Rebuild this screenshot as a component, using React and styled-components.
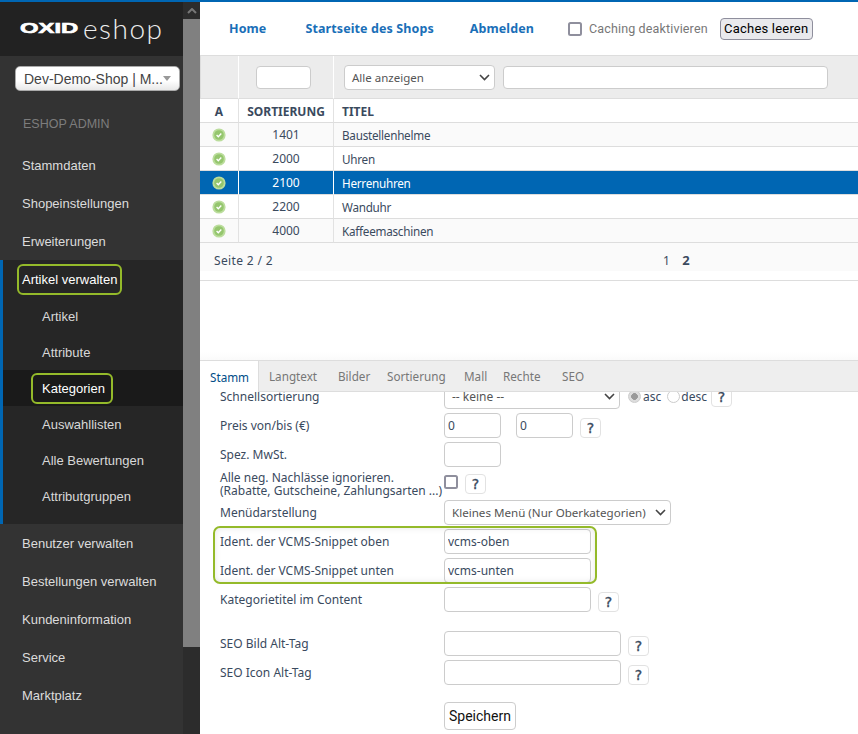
import React from "react";
import styled, { createGlobalStyle } from "styled-components";

const Global = createGlobalStyle`
  html, body { margin: 0; padding: 0; height: 100%; overflow: hidden; background: #fff; }
  * { box-sizing: border-box; }
`;
const Page = styled.div`
  width: 858px; height: 734px; display: flex; flex-direction: column; overflow: hidden;
  font-family: "Noto Sans", "Liberation Sans", sans-serif; font-size: 12px; color: #3a4a5e;
`;
const TopLine = styled.div`height: 2px; background: #0066b3; flex: none;`;
const Body = styled.div`flex: 1; display: flex; min-height: 0;`;
const Sidebar = styled.aside`
  width: 183px; flex: none; background: #333; font-family: "Liberation Sans", Arial, sans-serif;
  font-size: 13px; color: #dcdcdc; display: flex; flex-direction: column;
`;
const LogoBar = styled.div`
  height: 54px; background: #222; display: flex; align-items: center; padding: 0 0 2px 20px; color: #fff;
`;
const LogoOxid = styled.span`
  font: 900 14px "Liberation Sans", sans-serif; display: inline-block; width: 57px;
  transform: scaleX(1.7); transform-origin: left center; -webkit-text-stroke: .6px #fff;
`;
const LogoShop = styled.span`
  font: 300 28px Lato, sans-serif; margin-left: 6px; letter-spacing: 1.5px; color: #eee; line-height: 30px;
`;
const ShopSelect = styled.div`
  margin: 10px 3px 0 15px; height: 25px; border-radius: 5px; border: 1px solid #aaa; padding: 0 9px 0 8px;
  background: linear-gradient(#fff 60%, #e8e8e8); color: #444; display: flex; align-items: center;
  justify-content: space-between; white-space: nowrap; font-size: 14px;
`;
const Caret = styled.i`
  width: 0; height: 0; border: 4px solid transparent; border-top: 5px solid #999; border-bottom: 0;
`;
const Heading = styled.div`
  color: #7d7d7d; font-size: 12.5px; margin: 26px 0 0 23px; height: 15px; line-height: 15px;
`;
const Nav = styled.nav`margin-top: 14px; display: flex; flex-direction: column;`;
const NavItem = styled.div`height: 38px; padding: 1px 0 0 22px; line-height: 38px;`;
const OpenGroup = styled.div`height: 264px; background: #262626; border-left: 3px solid #0066b3;`;
const GroupHead = styled.div`height: 38px; padding: 0 0 0 19px; display: flex; align-items: center; color: #fff;`;
const SubItem = styled.div`
  height: 36px; padding-left: 39px; display: flex; align-items: center;
  background: ${(p) => (p.$active ? "#1a1a1a" : "transparent")};
  color: ${(p) => (p.$active ? "#fff" : "#d8d8d8")};
`;
const Marked = styled.span`
  border: 2px solid #94ba2a; border-radius: 6px; padding: 6px ${(p) => p.$pr}px 5px ${(p) => p.$pl}px;
  margin-left: ${(p) => -(p.$pl + 2)}px; line-height: 16px;
`;
const Scrollbar = styled.div`width: 17px; flex: none; background: #2c2c2c; display: flex; flex-direction: column;`;
const ScrollUp = styled.div`height: 17px; display: flex; align-items: center; justify-content: center; flex: none;`;
const Thumb = styled.div`height: 628px; background: #808080; flex: none;`;

const Main = styled.main`flex: 1; min-width: 0; display: flex; flex-direction: column;`;
const TopNav = styled.div`height: 53px; display: flex; align-items: center; padding: 0 0 0 29px; flex: none;`;
const TopLink = styled.a`
  color: #1a6fb8; font-weight: 700; font-size: 12.5px; margin-right: ${(p) => p.$gap}px; letter-spacing: .1px;
`;
const Check = styled.span`
  width: 14px; height: 14px; flex: none; border: 2px solid #8f8f9d; border-radius: 2.5px; background: #fff; display: inline-block;
  margin-top: ${(p) => p.$mt || 0}px;
`;
const CacheLabel = styled.span`color: #777; font-size: 12.5px; margin: 0 12px 0 7px; font-family: Roboto, sans-serif; letter-spacing: .15px;`;
const CacheBtn = styled.button`
  height: 22px; width: 93px; border: 1px solid #8f8f9d; border-radius: 4px; background: #e9e9ed; padding: 0;
  font: 13px Roboto, sans-serif; color: #000; letter-spacing: .2px;
`;
const Table = styled.div`flex: none; display: grid; grid-template-columns: 39px 95px 1fr; border-top: 1px solid #ddd;`;
const FilterCell = styled.div`
  height: 43px; background: #ececec; display: flex; align-items: center; gap: 8px;
  border-right: ${(p) => (p.$last ? "0" : "1px solid #fff")}; border-bottom: 1px solid #ddd;
  border-left: ${(p) => (p.$first ? "1px solid #ddd" : "0")};
  padding-left: ${(p) => p.$pad || 0}px; padding-right: 30px;
`;
const Field = styled.input`
  width: ${(p) => p.$w}px; height: ${(p) => p.$h || 23}px; border: 1px solid #ccc; border-radius: 4px; background: #fff;
  font: 12px "Noto Sans", sans-serif; color: #3a4a5e; padding: 0 3px; outline: 0; flex: ${(p) => (p.$grow ? 1 : "none")};
  margin-left: ${(p) => p.$ml || 0}px; min-width: 0;
`;
const FakeSelect = styled.div`
  width: ${(p) => p.$w}px; height: 25px; border: 1px solid #ccc; border-radius: 4px; background: #fff; flex: none;
  display: flex; align-items: center; justify-content: space-between; padding: 0 4px 0 7px; color: #555; white-space: nowrap;
  font-size: ${(p) => p.$fs || 12}px;
`;
const HeadCell = styled.div`
  height: 24px; padding-top: 1px; display: flex; align-items: center; justify-content: ${(p) => (p.$left ? "flex-start" : "center")};
  padding-left: ${(p) => (p.$left ? 8 : 0)}px; font-weight: 700; font-size: 12px; color: #3a4a5e; background: #fff;
  border-right: ${(p) => (p.$last ? "0" : "1px solid #e2e2e2")}; border-bottom: 1px solid #ddd;
`;
const Cell = styled.div`
  height: 24px; display: flex; align-items: center; justify-content: ${(p) => (p.$left ? "flex-start" : "center")};
  padding-left: ${(p) => (p.$left ? 8 : 0)}px;
  font-size: ${(p) => (p.$left ? 11.7 : 12)}px; letter-spacing: ${(p) => (p.$left ? -0.25 : 0)}px;
  background: ${(p) => (p.$sel ? "#0066b3" : p.$alt ? "#fafafa" : "#fff")};
  color: ${(p) => (p.$sel ? "#fff" : "#3a4a5e")};
  border-right: ${(p) => (p.$last ? "0" : p.$sel ? "1px solid #fff" : "1px solid #e2e2e2")};
  border-bottom: 1px solid #ddd;
`;
const Pager = styled.div`
  height: 28px; padding: 6px 0 0 14px; background: #fafafa; display: flex; align-items: center; flex: none; letter-spacing: .35px;
`;
const PagerInfo = styled.span`flex: 0 0 449px;`;
const PagerNum = styled.span`margin-right: 12px; font-weight: ${(p) => (p.$b ? 700 : 400)}; font-size: ${(p) => (p.$b ? 13 : 12)}px;`;
const ListEnd = styled.div`height: 10px; border-bottom: 1px solid #ddd; flex: none;`;
const Gap = styled.div`height: 80px; border-bottom: 1px solid #ddd; flex: none; background: linear-gradient(#fff 90%, #fafafa);`;
const Tabs = styled.div`height: 31px; background: #eee; display: flex; flex: none; border-bottom: 1px solid #ddd;`;
const Tab = styled.div`
  height: ${(p) => (p.$active ? 31 : 30)}px; width: ${(p) => p.$w}px; flex: none; padding-left: 10px; display: flex; align-items: center; white-space: nowrap;
  font-size: 11.7px;
  background: ${(p) => (p.$active ? "#fff" : "transparent")}; color: ${(p) => (p.$active ? "#004d88" : "#777")};
  border-right: ${(p) => (p.$active ? "1px solid #ddd" : 0)};
`;
const FormClip = styled.div`flex: 1; min-height: 0; overflow: hidden; padding-left: 20px;`;
const Form = styled.div`margin-top: -10px; display: flex; flex-direction: column;`;
const Row = styled.div`
  display: flex; align-items: center; height: 29px; margin-bottom: ${(p) => p.$mb || 0}px;
`;
const Label = styled.div`flex: 0 0 224px; line-height: 13px; white-space: nowrap;`;
const Help = styled.span`
  width: 21px; height: 20px; flex: none; border: 1px solid #e2e2e2; border-radius: 4px; margin-left: ${(p) => p.$ml || 7}px;
  margin-top: ${(p) => (p.$flat ? 0 : 4)}px;
  display: inline-flex; align-items: center; justify-content: center; font: 400 14px "DejaVu Sans", sans-serif; color: #3a4a5e; background: #fff;
  -webkit-text-stroke: .35px #3a4a5e;
`;
const Radio = styled.span`
  width: 13px; height: 13px; border-radius: 50%; border: 1px solid #ccc; background: ${(p) => (p.$on ? "radial-gradient(#999 40%, #ddd 45%)" : "#fff")}; margin-left: ${(p) => p.$ml}px; flex: none;
`;
const RadioText = styled.span`margin-left: ${(p) => p.$ml}px;`;
const Highlight = styled.div`
  position: relative; margin-left: -7px; padding-left: 7px;
  &::after {
    content: ""; position: absolute; left: 0; width: 380px; top: -1px; bottom: 1px;
    border: 2px solid #94ba2a; border-radius: 7px; box-shadow: inset 0 0 6px rgba(0,0,0,.1); pointer-events: none;
  }
`;
const SaveBtn = styled.button`
  width: 72px; height: 28px; border: 1px solid #ccc; border-radius: 4px; background: #fff; font: 14px Roboto, sans-serif; color: #111; padding: 0;
`;
const Chevron = () => (
  <svg width="11" height="7" viewBox="0 0 11 7"><path d="M1 1l4.5 4.5L10 1" fill="none" stroke="#444" strokeWidth="1.6" /></svg>
);
const OkIcon = () => (
  <svg width="14" height="14" viewBox="0 0 14 14">
    <circle cx="7" cy="7" r="6.6" fill="#bbdd9c" />
    <circle cx="7" cy="7" r="4.8" fill="#95c66e" />
    <path d="M4.6 7l1.7 1.7 3-3.2" fill="none" stroke="#fff" strokeWidth="1.4" />
  </svg>
);

const rows = [
  ["1401", "Baustellenhelme"], ["2000", "Uhren"], ["2100", "Herrenuhren", true], ["2200", "Wanduhr"], ["4000", "Kaffeemaschinen"],
];
const tabs = [["Langtext", 69], ["Bilder", 49], ["Sortierung", 77], ["Mall", 39], ["Rechte", 59], ["SEO", 33]];

export default function App() {
  return (
    <Page>
      <Global />
      <TopLine />
      <Body>
        <Sidebar>
          <LogoBar><LogoOxid>OXID</LogoOxid><LogoShop>eshop</LogoShop></LogoBar>
          <ShopSelect>Dev-Demo-Shop | M...<Caret /></ShopSelect>
          <Heading>ESHOP ADMIN</Heading>
          <Nav>
            <NavItem>Stammdaten</NavItem>
            <NavItem>Shopeinstellungen</NavItem>
            <NavItem>Erweiterungen</NavItem>
            <OpenGroup>
              <GroupHead><Marked $pl={3} $pr={3}>Artikel verwalten</Marked></GroupHead>
              <SubItem>Artikel</SubItem>
              <SubItem>Attribute</SubItem>
              <SubItem $active><Marked $pl={9} $pr={6}>Kategorien</Marked></SubItem>
              <SubItem>Auswahllisten</SubItem>
              <SubItem>Alle Bewertungen</SubItem>
              <SubItem>Attributgruppen</SubItem>
            </OpenGroup>
            <NavItem>Benutzer verwalten</NavItem>
            <NavItem>Bestellungen verwalten</NavItem>
            <NavItem>Kundeninformation</NavItem>
            <NavItem>Service</NavItem>
            <NavItem>Marktplatz</NavItem>
          </Nav>
        </Sidebar>
        <Scrollbar>
          <ScrollUp>
            <svg width="10" height="6" viewBox="0 0 10 6"><path d="M1 5l4-4 4 4" fill="none" stroke="#777" strokeWidth="2" /></svg>
          </ScrollUp>
          <Thumb />
        </Scrollbar>
        <Main>
          <TopNav>
            <TopLink $gap={39}>Home</TopLink>
            <TopLink $gap={36}>Startseite des Shops</TopLink>
            <TopLink $gap={34}>Abmelden</TopLink>
            <Check />
            <CacheLabel>Caching deaktivieren</CacheLabel>
            <CacheBtn>Caches leeren</CacheBtn>
          </TopNav>
          <Table>
            <FilterCell $first />
            <FilterCell $pad={17}><Field $w={55} /></FilterCell>
            <FilterCell $last $pad={10}>
              <FakeSelect $w={151} $fs={11.5}>Alle anzeigen<Chevron /></FakeSelect>
              <Field $grow />
            </FilterCell>
            <HeadCell>A</HeadCell>
            <HeadCell>SORTIERUNG</HeadCell>
            <HeadCell $left $last>TITEL</HeadCell>
            {rows.map(([n, t, sel], i) => (
              <React.Fragment key={n}>
                <Cell $sel={sel} $alt={i % 2 === 0}><OkIcon /></Cell>
                <Cell $sel={sel} $alt={i % 2 === 0}>{n}</Cell>
                <Cell $sel={sel} $alt={i % 2 === 0} $left $last>{t}</Cell>
              </React.Fragment>
            ))}
          </Table>
          <Pager>
            <PagerInfo>Seite 2 / 2</PagerInfo>
            <PagerNum>1</PagerNum>
            <PagerNum $b>2</PagerNum>
          </Pager>
          <ListEnd />
          <Gap />
          <Tabs>
            <Tab $active $w={59}>Stamm</Tab>
            {tabs.map(([t, w]) => <Tab key={t} $w={w}>{t}</Tab>)}
          </Tabs>
          <FormClip>
            <Form>
              <Row>
                <Label>Schnellsortierung</Label>
                <FakeSelect $w={176}>-- keine --<Chevron /></FakeSelect>
                <Radio $on $ml={8} /><RadioText $ml={2}>asc</RadioText>
                <Radio $ml={6} /><RadioText $ml={1}>desc</RadioText>
                <Help $ml={4} $flat>?</Help>
              </Row>
              <Row>
                <Label>Preis von/bis (€)</Label>
                <Field $w={57} $h={25} defaultValue="0" />
                <Field $w={57} $h={25} $ml={15} defaultValue="0" />
                <Help>?</Help>
              </Row>
              <Row><Label>Spez. MwSt.</Label><Field $w={57} $h={25} /></Row>
              <Row>
                <Label>Alle neg. Nachlässe ignorieren.<br />(Rabatte, Gutscheine, Zahlungsarten ...)</Label>
                <Check $mt={-4} />
                <Help $flat>?</Help>
              </Row>
              <Row>
                <Label>Menüdarstellung</Label>
                <FakeSelect $w={227} $fs={11.6}>Kleines Menü (Nur Oberkategorien)<Chevron /></FakeSelect>
              </Row>
              <Highlight>
                <Row><Label>Ident. der VCMS-Snippet oben</Label><Field $w={147} $h={25} defaultValue="vcms-oben" /></Row>
                <Row><Label>Ident. der VCMS-Snippet unten</Label><Field $w={147} $h={25} defaultValue="vcms-unten" /></Row>
              </Highlight>
              <Row $mb={15}>
                <Label>Kategorietitel im Content</Label>
                <Field $w={147} $h={25} />
                <Help>?</Help>
              </Row>
              <Row><Label>SEO Bild Alt-Tag</Label><Field $w={177} $h={25} /><Help>?</Help></Row>
              <Row $mb={14}><Label>SEO Icon Alt-Tag</Label><Field $w={177} $h={25} /><Help>?</Help></Row>
              <Row><Label /><SaveBtn>Speichern</SaveBtn></Row>
            </Form>
          </FormClip>
        </Main>
      </Body>
    </Page>
  );
}
